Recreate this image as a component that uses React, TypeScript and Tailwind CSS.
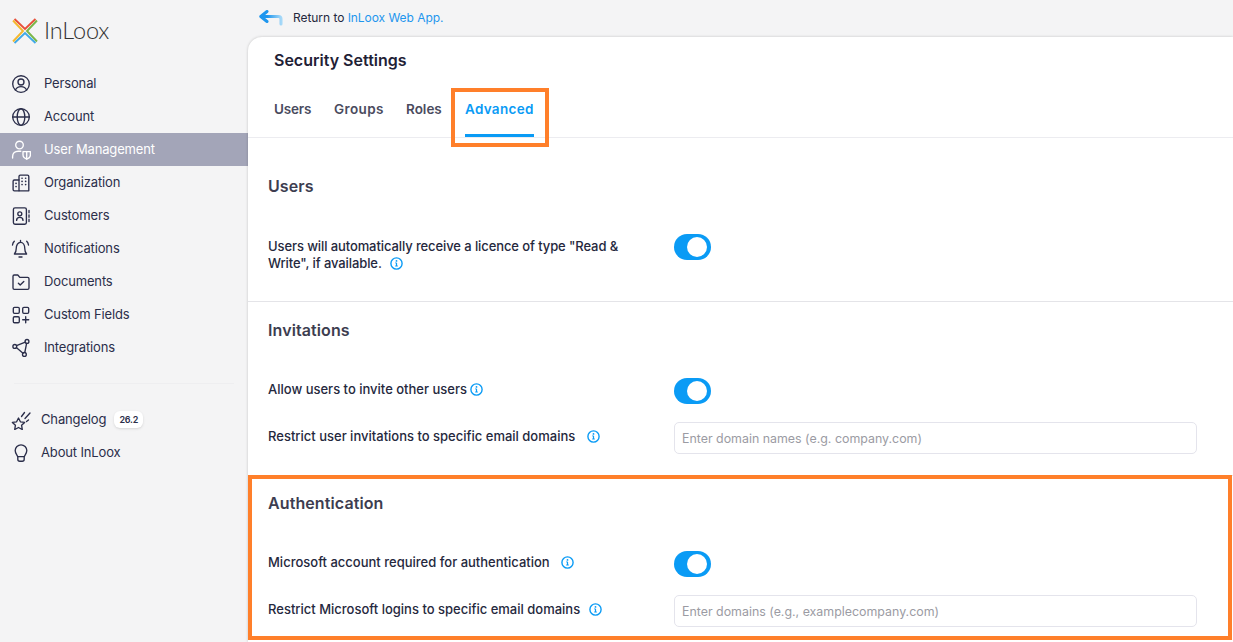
import React from "react";

const font = "font-['Inter','Liberation_Sans',sans-serif]";

function Icon({ children, className = "" }: { children: React.ReactNode; className?: string }) {
  return (
    <svg
      viewBox="0 0 20 20"
      fill="none"
      stroke="currentColor"
      strokeWidth="1.35"
      strokeLinecap="round"
      strokeLinejoin="round"
      className={`w-5 h-5 shrink-0 ${className}`}
    >
      {children}
    </svg>
  );
}

const icons = {
  personal: (
    <>
      <circle cx="10" cy="10" r="8.3" />
      <circle cx="10" cy="8" r="3" />
      <path d="M4.400 16c1-2.400 3-3.400 5.600-3.400s4.600 1 5.600 3.400" />
    </>
  ),
  account: (
    <>
      <circle cx="10" cy="10" r="8.3" />
      <path d="M1.700 10h16.600" />
      <ellipse cx="10" cy="10" rx="3.800" ry="8.300" />
    </>
  ),
  users: (
    <>
      <circle cx="8.500" cy="5" r="3.800" />
      <path d="M1.600 18v-1.600c0-3.200 2.400-5.200 5.600-5.200h2.600" />
      <path d="M12 11.600h7.400v3.200c0 2.200-1.600 3.600-3.700 4.200-2.100-.6-3.700-2-3.700-4.200z" />
      <path d="M15.700 11.600v7.400" />
    </>
  ),
  organization: (
    <>
      <path d="M8 17.800V3.400c0-.8.500-1.300 1.300-1.300h7.200c.8 0 1.300.5 1.300 1.300v14.400z" />
      <path d="M8 7H3.400c-.8 0-1.300.5-1.300 1.300v8.200c0 .8.500 1.300 1.300 1.300H8" />
      <path d="M11 5.200h.1M14.600 5.200h.1M11 8.400h.1M14.600 8.400h.1M11 11.600h.1M14.600 11.600h.1M5 10.400h.1M5 13.600h.1" strokeWidth="1.600" />
    </>
  ),
  customers: (
    <>
      <rect x="2.400" y="1.800" width="13" height="16.400" rx="1.600" />
      <circle cx="8.800" cy="7.800" r="2" />
      <path d="M5.600 14.400c0-2 1.400-3 3.200-3s3.200 1 3.200 3" />
      <path d="M18 4.400v2.400M18 8.800v2.400M18 13.200v2.400" />
    </>
  ),
  bell: (
    <>
      <path d="M3.400 15c1.400-1.400 1.800-3 1.800-5.200C5.200 6 7 3.300 9.500 3.300S13.800 6 13.800 9.800c0 2.200.4 3.800 1.800 5.200z" />
      <path d="M9.500 1.500v1.800M8 18h3" />
      <path d="M1.500 6c.2-1.500.8-2.800 1.800-3.800M17.500 6c-.2-1.500-.8-2.800-1.800-3.800" />
    </>
  ),
  documents: (
    <>
      <path d="M2 16V4.200C2 3.400 2.500 3 3.200 3h3.600l2 2.400h7.800c.9 0 1.400.5 1.400 1.300V16c0 .8-.5 1.300-1.400 1.300H3.300C2.500 17.300 2 16.800 2 16z" />
      <path d="M7.400 11.200l1.800 1.800 3.600-3.600" />
    </>
  ),
  fields: (
    <>
      <rect x="2.300" y="2.300" width="6" height="6" rx="1.200" />
      <rect x="11.700" y="2.300" width="6" height="6" rx="1.200" />
      <rect x="2.300" y="11.700" width="6" height="6" rx="1.200" />
      <path d="M14.700 11.700v6M11.700 14.700h6" />
    </>
  ),
  integrations: (
    <>
      <circle cx="3.800" cy="8.400" r="1.900" />
      <circle cx="16" cy="3.400" r="1.900" />
      <circle cx="13.400" cy="16.400" r="1.900" />
      <path d="M5.500 7.600l8.800-3.500M5.300 9.600l6.700 5.600M15.600 5.300l-1.800 9.200" />
    </>
  ),
  changelog: (
    <>
      <path d="M7.500 8l1.900 3.800 4.200.6-3 2.900.7 4.200-3.800-2-3.800 2 .7-4.200-3-2.900 4.200-.6z" />
      <path d="M10.500 6.500l3-4M14 8.500l5-5.500M15.500 11.500l2-1.500" />
    </>
  ),
  about: (
    <>
      <path d="M6.600 13.600c0-1.400-2.400-2.800-2.400-6 0-3.200 2.600-5.800 5.800-5.800s5.800 2.600 5.800 5.800c0 3.200-2.400 4.600-2.400 6z" />
      <path d="M6.800 13.600v2.600c0 1.200.8 2 2 2h2.400c1.200 0 2-.8 2-2v-2.600" />
    </>
  ),
};

const navItems: { name: string; icon: keyof typeof icons; active?: boolean }[] = [
  { name: "Personal", icon: "personal" },
  { name: "Account", icon: "account" },
  { name: "User Management", icon: "users", active: true },
  { name: "Organization", icon: "organization" },
  { name: "Customers", icon: "customers" },
  { name: "Notifications", icon: "bell" },
  { name: "Documents", icon: "documents" },
  { name: "Custom Fields", icon: "fields" },
  { name: "Integrations", icon: "integrations" },
];

function Logo() {
  return (
    <div className="flex items-center h-[67px] pl-3 pb-[5px]">
      <svg viewBox="0 0 26 26" fill="none" strokeWidth="1.900" className="w-[26px] h-[26px]">
        <path d="M2.500 1l10.500 10L23.500 1" stroke="#e8503a" />
        <path d="M25 2.500L15 13l10 10.500" stroke="#7ab648" />
        <path d="M23.500 25L13 15 2.500 25" stroke="#3fa9e8" />
        <path d="M1 23.500L11 13 1 2.500" stroke="#f5b82e" />
      </svg>
      <span className="ml-[6px] text-[23.500px] font-light text-[#333333] font-['Lato','Liberation_Sans',sans-serif]">
        InLoox
      </span>
    </div>
  );
}

function Info({ className }: { className: string }) {
  return (
    <svg viewBox="0 0 13 13" fill="none" className={`inline-block w-[13px] h-[13px] align-[-2px] text-[#0a9bf5] ${className}`}>
      <circle cx="6.500" cy="6.500" r="5.600" stroke="currentColor" strokeWidth="1.400" />
      <path d="M6.500 5.900v2.900M5.200 9h2.600M5.400 5.900h1.100" stroke="currentColor" strokeWidth="1.200" />
      <circle cx="6.500" cy="3.900" r=".9" fill="currentColor" />
    </svg>
  );
}

function Toggle() {
  return (
    <div className="w-[37px] h-[26px] rounded-full bg-[#0a9bf5] flex items-center justify-end pr-[4px]">
      <div className="w-[20px] h-[20px] rounded-full bg-white" />
    </div>
  );
}

function Row({ label, gap, placeholder }: { label: string; gap: string; placeholder?: string }) {
  return (
    <div className="grid grid-cols-[406px_1fr] items-center">
      <div className="text-[13px] leading-[17px] font-medium text-[#25283d] -mt-1">
        {label}
        <Info className={gap} />
      </div>
      {placeholder ? (
        <input
          placeholder={placeholder}
          className="w-full h-8 rounded-[5px] border border-[#e4e4ec] pl-[7px] pr-2 text-[12.400px] outline-none placeholder:text-[#9b9ba3] bg-white"
        />
      ) : (
        <Toggle />
      )}
    </div>
  );
}

function Heading({ children }: { children: React.ReactNode }) {
  return <h2 className="h-5 leading-5 mb-[38px] text-[16px] tracking-[0.1px] font-semibold text-[#3d3d50]">{children}</h2>;
}

export default function App() {
  return (
    <div className={`flex h-[642px] w-full overflow-hidden bg-[#f4f4f5] ${font}`}>
      <aside className="w-[248px] shrink-0 text-[13px] tracking-[-0.15px] text-[#2b2e4a]">
        <Logo />
        <nav className="flex flex-col">
          {navItems.map((item) => (
            <div
              key={item.name}
              className={`h-[33px] flex items-center pl-[11px] gap-[13px] ${item.active ? "bg-[#a3a5b8] text-white" : ""}`}
            >
              <Icon>{icons[item.icon]}</Icon>
              <span>{item.name}</span>
            </div>
          ))}
        </nav>
        <div className="mx-[14px] mt-[19px] mb-[19px] border-t border-[#eeeef0]" />
        <div className="flex flex-col">
          <div className="h-[33px] flex items-center pl-[11px] gap-[10px]">
            <Icon>{icons.changelog}</Icon>
            <span>Changelog</span>
            <span className="-ml-[2px] -mt-[1px] w-[29px] h-[17px] leading-[17px] text-center rounded-md bg-white shadow-sm text-[9px] tracking-[-0.2px] font-semibold">26.2</span>
          </div>
          <div className="h-[33px] flex items-center pl-[11px] gap-[10px]">
            <Icon>{icons.about}</Icon>
            <span>About InLoox</span>
          </div>
        </div>
      </aside>

      <main className="flex-1 flex flex-col min-w-0">
        <div className="h-[37px] shrink-0 flex items-center pl-[11px] text-[12px] tracking-[-0.05px] text-[#25283d]">
          <svg viewBox="0 0 24 16" fill="none" strokeWidth="3" strokeLinecap="round" strokeLinejoin="round" className="w-6 h-4 -mt-[2px]">
            <defs>
              <linearGradient id="tail" x1="0" x2="1" y1="0" y2="0">
                <stop offset="0.300" stopColor="#1e96ee" />
                <stop offset="1" stopColor="#a5d8f8" />
              </linearGradient>
            </defs>
            <path d="M8 1.500L1.800 6.500 8 11.500" stroke="#1e96ee" />
            <path d="M2.500 6.500h17c1.600 0 2.500 1 2.500 2.500v5" stroke="url(#tail)" />
          </svg>
          <span className="ml-[10px] -mt-[2px]">
            Return to <span className="text-[#1e96ee]">InLoox Web App.</span>
          </span>
        </div>

        <div className="flex-1 bg-white rounded-tl-[14px] shadow-[0_0_3px_rgba(0,0,0,0.2)]">
          <div className="h-[101px] border-b border-[#ececf0] pl-[26px] pt-[13px]">
            <h1 className="h-5 leading-5 text-[16px] font-semibold text-[#1f2136]">Security Settings</h1>
            <div className="flex gap-[23px] mt-[29px] text-[13.500px] font-semibold text-[#4a4b5e]">
              <div className="w-[37px] h-[38px] leading-5 tracking-[-0.2px]">Users</div>
              <div className="w-[49px] h-[38px] leading-5 tracking-[0.4px]">Groups</div>
              <div className="w-[36px] h-[38px] leading-5">Roles</div>
              <div className="relative w-[69px] h-[38px] leading-5 tracking-[0.3px] text-[#0a9bf5] border-b-[3px] border-[#0a9bf5]">
                Advanced
                <div className="absolute -left-[14px] -right-[15px] -top-[11px] -bottom-[13px] border-4 border-[#ff7f2a]" />
              </div>
            </div>
          </div>

          <section className="pl-5 pr-9 pt-[38px] pb-[29px]">
            <Heading>Users</Heading>
            <div className="grid grid-cols-[406px_1fr] items-start">
              <div className="pt-[4px] pr-[30px]">
                <div className="text-[13px] leading-[17px] font-medium text-[#25283d] tracking-[-0.1px]">
                  Users will automatically receive a licence of type "Read &amp; Write", if available.
                  <Info className="ml-2" />
                </div>
              </div>
              <Toggle />
            </div>
          </section>

          <section className="border-t border-[#e4e4e8] pl-5 pr-9 pt-[18px] pb-[21px]">
            <Heading>Invitations</Heading>
            <div className="flex flex-col gap-[18px]">
              <Row label="Allow users to invite other users" gap="ml-[3px]" />
              <Row label="Restrict user invitations to specific email domains" gap="ml-[12px]" placeholder="Enter domain names (e.g. company.com)" />
            </div>
          </section>

          <section className="relative border-t border-[#e4e4e8] pl-5 pr-9 pt-[17px] pb-[13px]">
            <Heading>Authentication</Heading>
            <div className="flex flex-col gap-[18px]">
              <Row label="Microsoft account required for authentication" gap="ml-[11px]" />
              <Row label="Restrict Microsoft logins to specific email domains" gap="ml-[9px]" placeholder="Enter domains (e.g., examplecompany.com)" />
            </div>
            <div className="absolute -top-px left-0 right-px bottom-0 border-4 border-[#ff7f2a] pointer-events-none" />
          </section>
        </div>
      </main>
    </div>
  );
}
